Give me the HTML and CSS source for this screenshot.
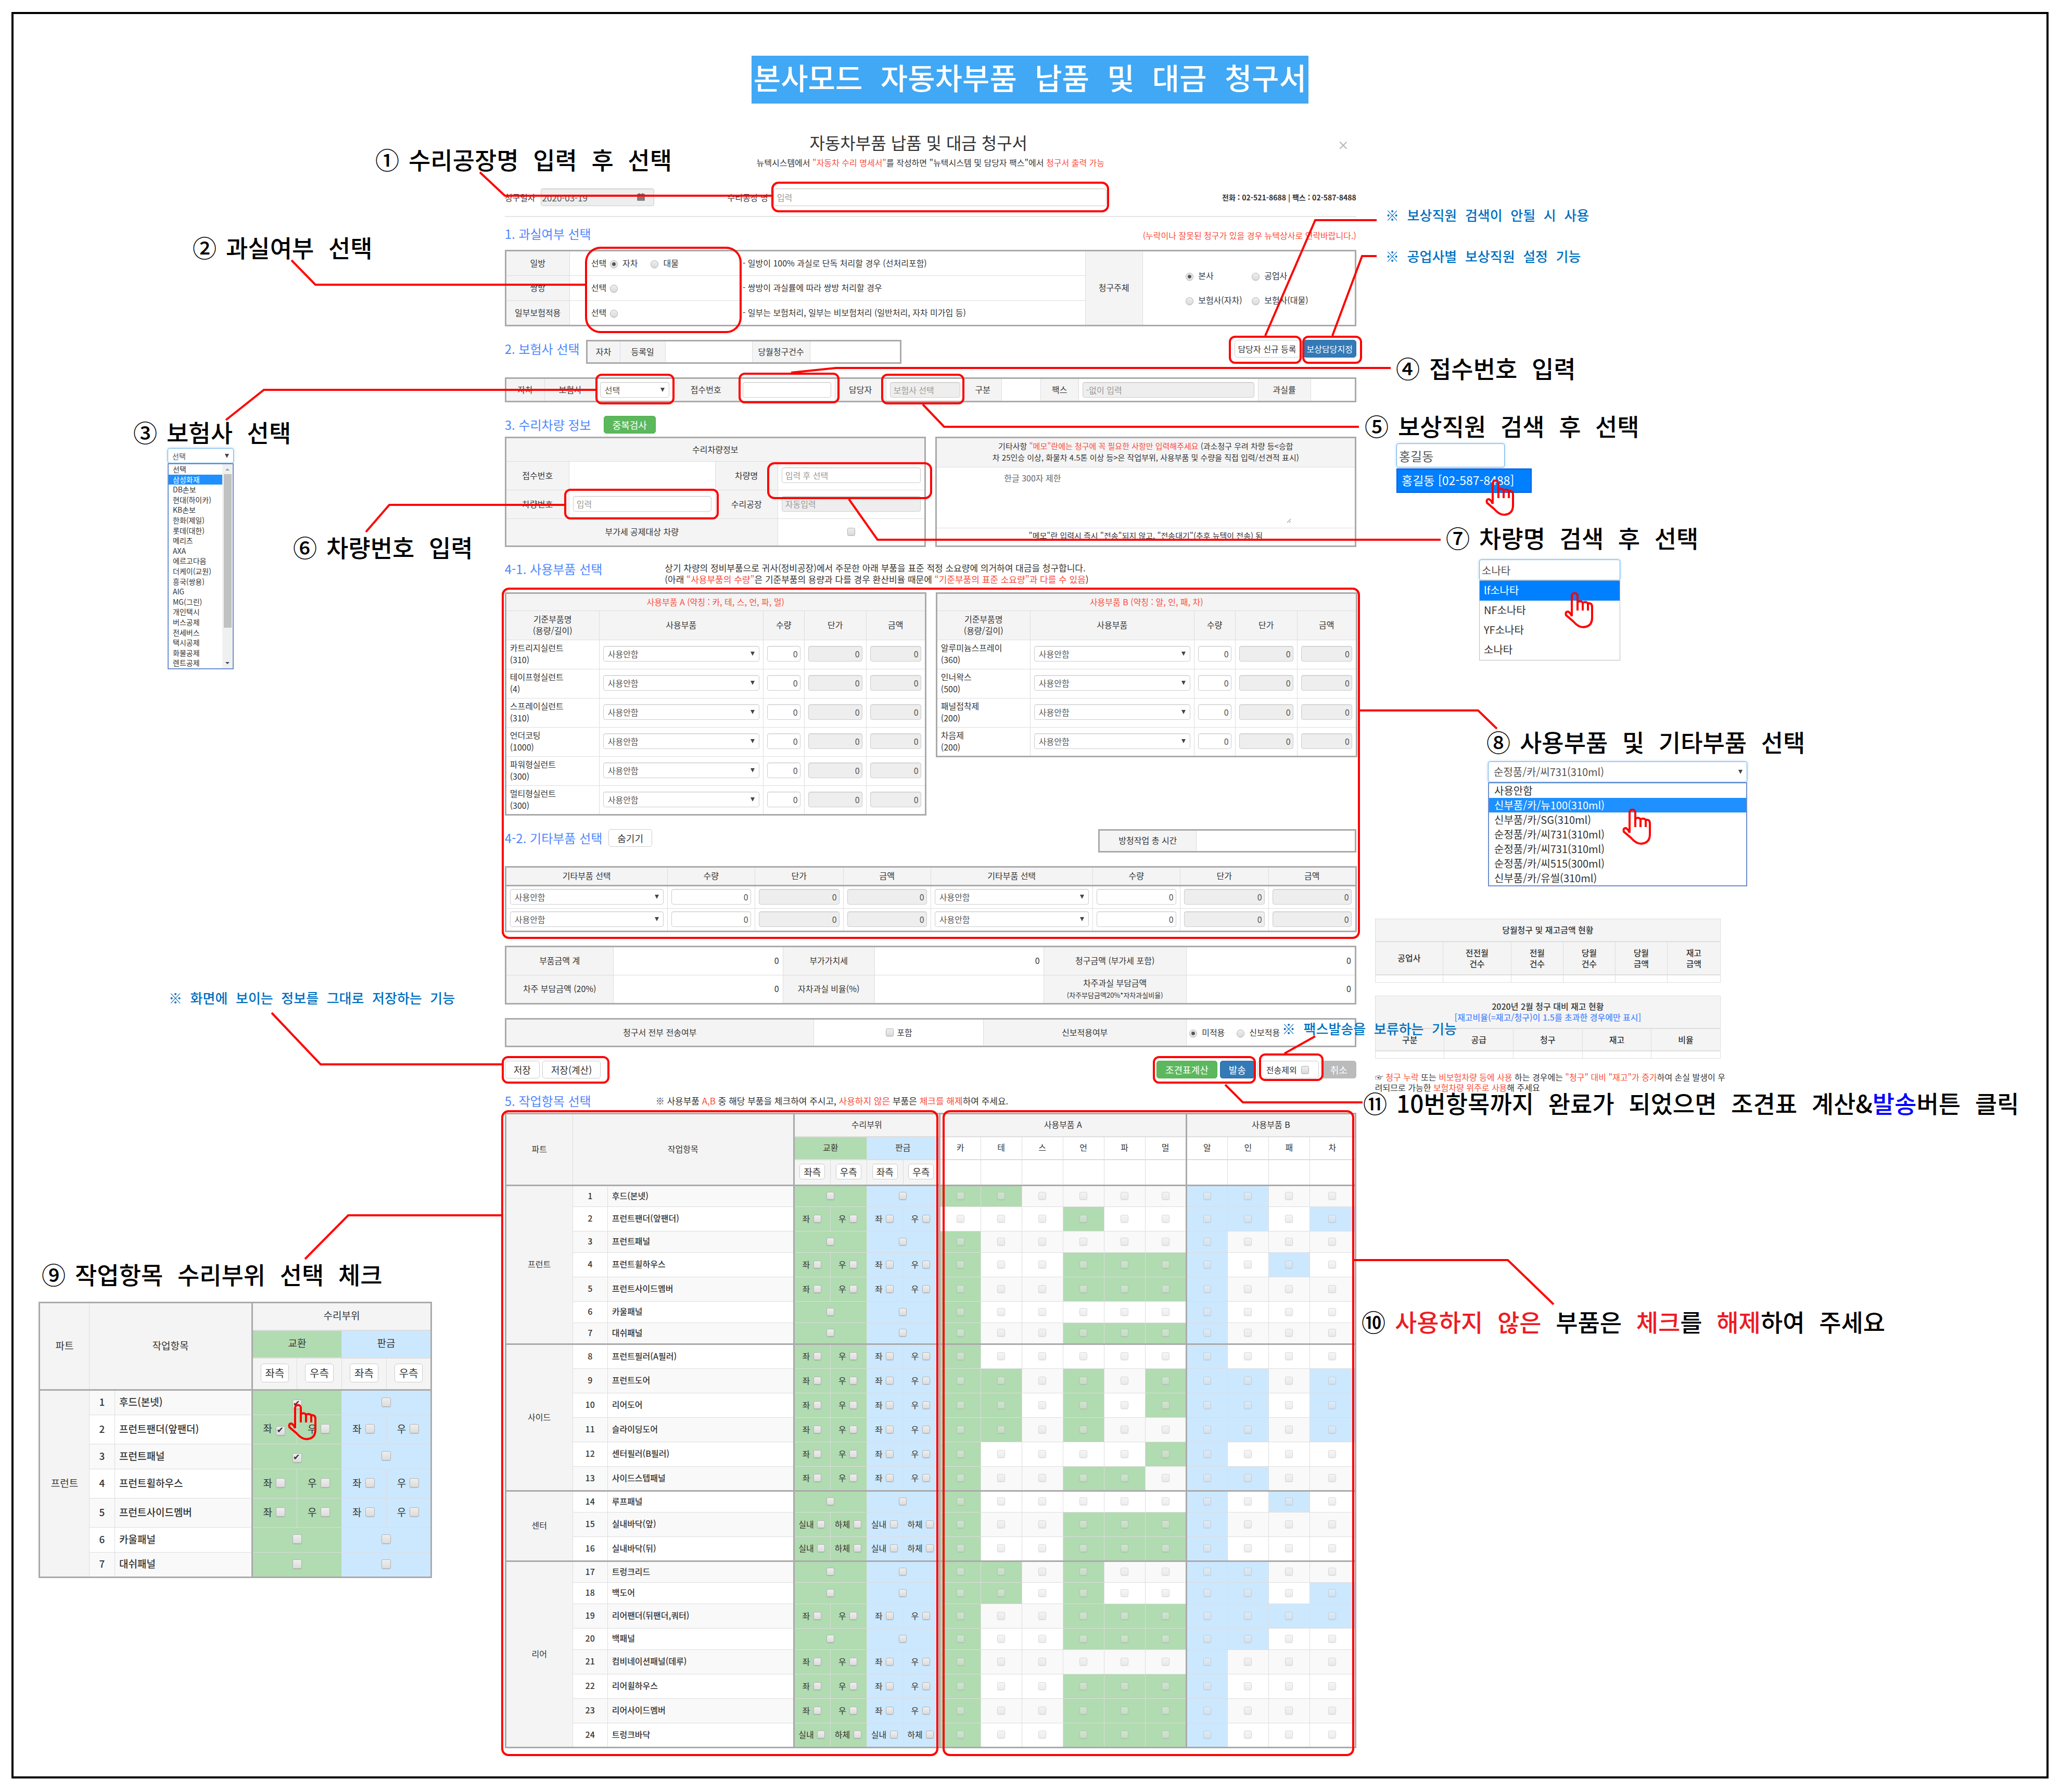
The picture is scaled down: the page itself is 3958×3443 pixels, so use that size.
FILE: index.html
```html
<!DOCTYPE html>
<html lang="ko">
<head>
<meta charset="utf-8">
<meta name="viewport" content="width=device-width, initial-scale=1">
<title>본사모드 자동차부품 납품 및 대금 청구서</title>
<link rel="stylesheet" href="styles.css">
</head>
<body>
<div class="poster">
  <h1 class="banner">본사모드 자동차부품 납품 및 대금 청구서</h1>
  <div class="board">
    <main class="claim">
      <header class="claim-head">
        <h2 class="claim-title">자동차부품 납품 및 대금 청구서</h2>
        <button class="close" type="button" aria-label="닫기">×</button>
        <p class="claim-sub">뉴텍시스템에서 <em>"자동차 수리 명세서"</em>를 작성하면 "뉴텍시스템 및 담당자 팩스"에서 <em>청구서 출력 가능</em></p>
      </header>

      <div class="top-row">
        <label for="date">청구일자</label>
        <span class="date-box"><input id="date" class="field locked" value="2020-03-19" readonly>
          <svg class="cal" viewBox="0 0 14 14" aria-hidden="true"><path d="M1 2h12v11H1zM1 5h12M1 8h12M1 10.500h12M4 0v3M10 0v3" fill="#aaa" stroke="#555" stroke-width="1.200"/></svg></span>
        <label for="shop" class="shop-label">수리공장 명</label>
        <input id="shop" class="field tall shop" placeholder="입력">
        <strong class="tel">전화 : 02-521-8688 | 팩스 : 02-587-8488</strong>
      </div>

      <div class="sec-head first">
        <h3>1. 과실여부 선택</h3>
        <em class="note">(누락이나 잘못된 청구가 있을 경우 뉴텍상사로 연락바랍니다.)</em>
      </div>
      <table class="sheet fault">
        <colgroup><col class="w-label"><col class="w-pick"><col class="w-desc"><col class="w-owner"><col></colgroup>
        <tr><th>일방</th><td class="seam">선택 <input type="radio" name="fault" id="f1" checked> <label for="f1">자차</label> <input class="apart" type="radio" name="fault" id="f2"> <label for="f2">대물</label></td><td>- 일방이 100% 과실로 단독 처리할 경우 (선처리포함)</td>
          <th rowspan="3">청구주체</th>
          <td rowspan="3"><div class="owners">
            <label><input type="radio" name="owner" checked> 본사</label><label><input type="radio" name="owner"> 공업사</label>
            <label><input type="radio" name="owner"> 보험사(자차)</label><label><input type="radio" name="owner"> 보험사(대물)</label></div></td></tr>
        <tr><th>쌍방</th><td class="seam"><label for="f3">선택</label> <input type="radio" name="fault" id="f3"></td><td>- 쌍방이 과실률에 따라 쌍방 처리할 경우</td></tr>
        <tr><th>일부보험적용</th><td class="seam"><label for="f4">선택</label> <input type="radio" name="fault" id="f4"></td><td>- 일부는 보험처리, 일부는 비보험처리 (일반처리, 자차 미가입 등)</td></tr>
      </table>

      <div class="band insurer-head">
        <h3>2. 보험사 선택</h3>
        <table class="sheet mini-sheet">
          <colgroup><col class="m1"><col class="m2"><col class="m3"><col class="m4"><col></colgroup>
          <tr><th>자차</th><th>등록일</th><td></td><th>당월청구건수</th><td></td></tr>
        </table>
        <div class="head-actions"><button type="button" class="btn small">담당자 신규 등록</button><button type="button" class="btn small primary">보상담당지정</button></div>
      </div>

      <table class="sheet band insurer">
        <colgroup><col class="i1"><col class="i2"><col class="i3"><col class="i4"><col class="i5"><col class="i6"><col class="i7"><col class="i8"><col class="i9"><col class="i10"><col class="i11"><col class="i12"><col></colgroup>
        <tr><th>자차</th><th>보험사</th><td><select class="field" aria-label="보험사"><option>선택</option></select></td>
          <th>접수번호</th><td><input class="field" aria-label="접수번호"></td>
          <th>담당자</th><td><input class="field locked" placeholder="보험사 선택" aria-label="담당자" readonly></td>
          <th>구분</th><td></td><th>팩스</th><td><input class="field locked" placeholder="-없이 입력" aria-label="팩스" readonly></td>
          <th>과실률</th><td></td></tr>
      </table>

      <div class="band car-head"><h3>3. 수리차량 정보</h3><button type="button" class="btn success check-btn">중복검사</button></div>
      <div class="pair">
        <table class="sheet car">
          <colgroup><col class="c-a"><col class="c-b"><col class="c-c"><col></colgroup>
          <tr class="h46"><th colspan="4">수리차량정보</th></tr>
          <tr class="h55"><th>접수번호</th><td></td><th>차량명</th><td><input class="field" placeholder="입력 후 선택" aria-label="차량명"></td></tr>
          <tr class="h55"><th>차량번호</th><td><input class="field" placeholder="입력" aria-label="차량번호"></td><th>수리공장</th><td><input class="field locked" placeholder="자동입력" aria-label="수리공장" readonly></td></tr>
          <tr class="h53"><th colspan="3"><label for="vat">부가세 공제대상 차량</label></th><td class="mid"><input type="checkbox" id="vat"></td></tr>
        </table>
        <table class="sheet memo">
          <tr class="h57"><th><label for="memo">기타사항 <em>"메모"란에는 청구에 꼭 필요한 사항만 입력해주세요</em> (과소청구 우려 차량 등&lt;승합<br>차 25인승 이상, 화물차 4.5톤 이상 등&gt;은 작업부위, 사용부품 및 수량을 직접 입력/선견적 표시)</label></th></tr>
          <tr class="h117"><td><textarea id="memo" placeholder="한글 300자 제한"></textarea></td></tr>
          <tr class="h35"><td class="mid">"메모"란 입력시 즉시 "전송"되지 않고, "전송대기"(추후 뉴텍이 전송) 됨</td></tr>
        </table>
      </div>

      <div class="parts-head">
        <h3>4-1. 사용부품 선택</h3>
        <p>상기 차량의 정비부품으로 귀사(정비공장)에서 주문한 아래 부품을 표준 적정 소요량에 의거하여 대금을 청구합니다.<br>(아래 <em>“사용부품의 수량”</em>은 기준부품의 용량과 다를 경우 환산비율 때문에 <em>“기준부품의 표준 소요량”과 다를 수 있음</em>)</p>
      </div>
      <div class="pair top">
        <table class="sheet parts" id="parts-a"></table>
        <table class="sheet parts" id="parts-b"></table>
      </div>

      <div class="band etc-head">
        <h3>4-2. 기타부품 선택</h3><button type="button" class="btn">숨기기</button>
        <table class="sheet hours"><colgroup><col class="hr-a"><col></colgroup><tr><th>방청작업 총 시간</th><td></td></tr></table>
      </div>
      <table class="sheet band etc" id="etc"></table>

      <table class="sheet band totals">
        <colgroup><col class="t1"><col class="t2"><col class="t3"><col class="t4"><col class="t5"><col></colgroup>
        <tr><th>부품금액 계</th><td>0</td><th>부가가치세</th><td>0</td><th>청구금액 (부가세 포함)</th><td>0</td></tr>
        <tr><th>차주 부담금액 (20%)</th><td>0</td><th>자차과실 비율(%)</th><td></td><th>차주과실 부담금액<br><small>(차주부담금액20%*자차과실비율)</small></th><td>0</td></tr>
      </table>

      <table class="sheet band send">
        <colgroup><col class="s1"><col class="s2"><col class="s3"><col></colgroup>
        <tr><th>청구서 전부 전송여부</th><td class="mid"><label><input type="checkbox"> 포함</label></td><th>신보적용여부</th>
          <td class="rate"><label><input type="radio" name="newrate" checked> 미적용</label> <label><input type="radio" name="newrate"> 신보적용</label></td></tr>
      </table>

      <div class="band actions">
        <button type="button" class="btn">저장</button><button type="button" class="btn">저장(계산)</button>
        <button type="button" class="btn success push">조견표계산</button><button type="button" class="btn primary">발송</button>
        <label class="btn hold">전송제외 <input type="checkbox"></label><button type="button" class="btn muted">취소</button>
      </div>

      <div class="work-head">
        <h3>5. 작업항목 선택</h3>
        <p>※ 사용부품 <em>A,B</em> 중 해당 부품을 체크하여 주시고, <em>사용하지 않은</em> 부품은 <em>체크를 해제</em>하여 주세요.</p>
      </div>
      <table class="sheet work" id="work"></table>
    </main>

    <aside class="side">
      <table class="stat stat-a">
        <colgroup><col class="a1"><col class="a2"><col class="a3"><col class="a3"><col class="a3"><col></colgroup>
        <tr class="h43"><th colspan="6">당월청구 및 재고금액 현황</th></tr>
        <tr class="h64"><th>공업사</th><th>전전월<br>건수</th><th>전월<br>건수</th><th>당월<br>건수</th><th>당월<br>금액</th><th>재고<br>금액</th></tr>
        <tr class="h15"><td></td><td></td><td></td><td></td><td></td><td></td></tr>
      </table>
      <table class="stat stat-b">
        <tr class="h62"><th colspan="5">2020년 2월 청구 대비 재고 현황<br><span class="link-blue">[재고비율(=재고/청구)이 1.5를 초과한 경우에만 표시]</span></th></tr>
        <tr class="h43"><th>구분</th><th>공급</th><th>청구</th><th>재고</th><th>비율</th></tr>
        <tr class="h15"><td></td><td></td><td></td><td></td><td></td></tr>
      </table>
      <p class="stat-note">☞ <em>청구 누락</em> 또는 <em>비보험차량 등에 사용</em> 하는 경우에는 <em>"청구" 대비 "재고"가 증가</em>하여 손실 발생이 우려되므로 가능한 <em>보험차량 위주로 사용</em>해 주세요</p>
    </aside>
  </div>
</div>

<div class="notes">
  <div class="sample s-insurer">
    <select class="field focus" aria-label="보험사 예시"><option>선택</option></select>
    <div class="drop scroll">
      <ul><li>선택</li><li class="on">삼성화재</li><li>DB손보</li><li>현대(하이카)</li><li>KB손보</li><li>한화(제일)</li><li>롯데(대한)</li><li>메리츠</li><li>AXA</li><li>에르고다음</li><li>더케이(교원)</li><li>흥국(쌍용)</li><li>AIG</li><li>MG(그린)</li><li>개인택시</li><li>버스공제</li><li>전세버스</li><li>택시공제</li><li>화물공제</li><li>렌트공제</li></ul>
      <div class="bar"><span class="tri up"></span><span class="thumb"></span><span class="tri down"></span></div>
    </div>
  </div>
  <div class="sample s-staff">
    <input class="field focus" value="홍길동" aria-label="담당자 예시">
    <ul class="drop"><li class="on">홍길동 [02-587-8488]</li></ul>
  </div>
  <div class="sample s-car">
    <input class="field focus" value="소나타" aria-label="차량명 예시">
    <ul class="drop"><li class="on">lf소나타</li><li>NF소나타</li><li>YF소나타</li><li>소나타</li></ul>
  </div>
  <div class="sample s-part">
    <select class="field focus" aria-label="사용부품 예시"><option>순정품/카/씨731(310ml)</option></select>
    <ul class="drop"><li>사용안함</li><li class="on">신부품/카/뉴100(310ml)</li><li>신부품/카/SG(310ml)</li><li>순정품/카/씨731(310ml)</li><li>순정품/카/씨731(310ml)</li><li>순정품/카/씨515(300ml)</li><li>신부품/카/유씰(310ml)</li></ul>
  </div>
  <div class="sample s-work"><table class="sheet work large" id="work-sample"></table></div>

  <svg class="lines" viewBox="0 0 3958 3443" aria-hidden="true">
    <defs>
      <g id="hand"><path d="M14 47V8a5.500 5.500 0 0 1 11 0V36M25 20q6-4 10 1V36M35 21q6-3 10 1V36M45 22q8-1 8 7V50q0 17-17 18c-8 0-14-5-19-11L3 45q-2-7 4-7q4 2 7 9"/></g>
    </defs>
    <rect x="1484" y="351" width="645" height="55" rx="12"/>
    <rect x="1126" y="476" width="297" height="162" rx="28"/>
    <rect x="2363" y="647" width="136" height="50" rx="10"/>
    <rect x="2504" y="647" width="111" height="50" rx="10"/>
    <rect x="1146" y="720" width="148" height="55" rx="10"/>
    <rect x="1421" y="718" width="190" height="55" rx="10"/>
    <rect x="1695" y="720" width="156" height="55" rx="10"/>
    <rect x="1476" y="890" width="313" height="67" rx="12"/>
    <rect x="1086" y="941" width="293" height="55" rx="10"/>
    <rect x="966" y="1131" width="1645" height="671" rx="12"/>
    <rect x="966" y="2031" width="203" height="49" rx="10"/>
    <rect x="2217" y="2031" width="194" height="49" rx="10"/>
    <rect x="2421" y="2026" width="120" height="49" rx="10"/>
    <rect x="965" y="2135" width="836" height="1237" rx="12"/>
    <rect x="1813" y="2135" width="787" height="1237" rx="12"/>
    <path d="M922 331 970 376H1484M560 500 606 547H1126M434 807 507 749H1146M1520 716 1606 707H2672M1773 777 1814 820H2611M703 1022 748 970H1086M1631 959 1686 1037H2768M2613 1365H2840L2876 1400M2431 645 2527 423H2645M2560 645 2617 492H2645M522 1946 616 2045H966M2354 2084 2388 2118H2618M2468 2024 2527 1991M965 2335H669L586 2419M2602 2421H2897L2985 2506"/>
    <use href="#hand" x="2854" y="921"/><use href="#hand" x="3006" y="1137"/><use href="#hand" x="3117" y="1553"/><use href="#hand" x="553" y="2697"/>
  </svg>

  <p class="callout c1"><span>①</span><span>수리공장명 입력 후 선택</span></p>
  <p class="callout c2"><span>②</span><span>과실여부 선택</span></p>
  <p class="callout c3"><span>③</span><span>보험사 선택</span></p>
  <p class="callout c4"><span>④</span><span>접수번호 입력</span></p>
  <p class="callout c5"><span>⑤</span><span>보상직원 검색 후 선택</span></p>
  <p class="callout c6"><span>⑥</span><span>차량번호 입력</span></p>
  <p class="callout c7"><span>⑦</span><span>차량명 검색 후 선택</span></p>
  <p class="callout c8"><span>⑧</span><span>사용부품 및 기타부품 선택</span></p>
  <p class="callout c9"><span>⑨</span><span>작업항목 수리부위 선택 체크</span></p>
  <p class="callout c10"><span>⑩</span><span><b class="hot">사용하지 않은</b> 부품은 <b class="hot">체크</b>를 <b class="hot">해제</b>하여 주세요</span></p>
  <p class="callout c11"><span>⑪</span><span><b class="latin">10</b>번항목까지 완료가 되었으면 조견표 계산<b class="latin">&amp;</b><b class="blue">발송</b>버튼 클릭</span></p>
  <p class="tip t-a">※ 보상직원 검색이 안될 시 사용</p>
  <p class="tip t-b">※ 공업사별 보상직원 설정 기능</p>
  <p class="tip t-c">※ 화면에 보이는 정보를 그대로 저장하는 기능</p>
  <p class="tip t-d">※ 팩스발송을 보류하는 기능</p>
</div>
<script src="app.js"></script>
</body>
</html>
```
FILE: styles.css
```css
* { box-sizing: border-box; }
body {
  margin: 0;
  position: relative;
  background: #fff;
  color: #333;
  font: 16px/22px "Noto Sans CJK KR", "Noto Sans", sans-serif;
}
h1, h2, h3, p, ul { margin: 0; padding: 0; font-weight: 400; }
em { font-style: normal; color: #fb4b3b; }
ul { list-style: none; }

.poster {
  margin: 23px 22px;
  border: 4px solid #000;
  padding: 80px 0 54px;
}
.banner {
  width: fit-content;
  margin: 0 auto;
  padding: 8px 4px 0;
  background: #41a8f5;
  color: #fff;
  font: 500 57px/84px "Liberation Mono", "Noto Sans CJK KR", sans-serif;
}
.board {
  display: grid;
  grid-template-columns: minmax(0, 1636fr) minmax(0, 1326fr);
  padding-left: 24.160%;
}
.claim { display: flex; flex-direction: column; padding-top: 52px; }
.claim > .band { margin-top: 26px; }
h3 { color: #4f87ff; font-size: 24px; line-height: 34px; white-space: nowrap; }

.claim-head { position: relative; text-align: center; }
.claim-title { font-size: 32px; line-height: 44px; padding-right: 46px; }
.claim-sub { margin-top: 6px; }
.close {
  position: absolute; right: 14px; top: 12px;
  border: 0; padding: 0; background: none; color: #bbb;
  font: 700 22px/28px "Noto Sans CJK KR", sans-serif;
}

/* form controls */
.field {
  display: block; width: 100%; height: 30px;
  border: 1px solid #ccc; border-radius: 4px;
  padding: 0 6px; background-color: #fff; color: #555;
  font: 16px/22px "Noto Sans CJK KR", sans-serif;
  box-shadow: inset 0 1px 1px rgba(0, 0, 0, .08);
}
.field::placeholder { color: #999; opacity: 1; }
.field.locked { background-color: #eee; }
select.field {
  appearance: none; padding: 0 8px;
  background-image: url("data:image/svg+xml,%3Csvg xmlns='http://www.w3.org/2000/svg' width='8' height='8'%3E%3Cpath d='M0 0h8L4 8z' fill='%23444'/%3E%3C/svg%3E");
  background-repeat: no-repeat; background-position: right 8px center;
}
input[type="radio"], input[type="checkbox"] {
  appearance: none; width: 15px; height: 15px; margin: 0 2px;
  border: 1px solid #b4b4b4; border-radius: 3px;
  background: linear-gradient(#eee, #dcdcdc);
  vertical-align: -1px;
  box-shadow: 0 1px 1px rgba(0, 0, 0, .15);
}
input[type="radio"] { border-radius: 50%; margin-right: 5px; vertical-align: -3px; }
input[type="radio"]:checked { background: radial-gradient(circle, #555 0 3px, #e6e6e6 4px); }
input[type="checkbox"]:checked::before {
  content: "✔"; display: block; color: #333;
  font: 16px/13px "DejaVu Sans", sans-serif;
}
input:disabled { opacity: .5; }
.btn {
  height: 34px; border: 1px solid #ccc; border-radius: 5px;
  padding: 0 16px; background: #fff; color: #333;
  font: 18px/22px "Noto Sans CJK KR", sans-serif; white-space: nowrap;
}
.btn.small { padding: 0 6px; font-size: 16px; }
.btn.success { background: #5cb85c; border-color: #4cae4c; color: #fff; }
.btn.primary { background: #337ab7; border-color: #2e6da4; color: #fff; }
.btn.muted { background: #bbb; border-color: #bbb; color: #fff; }

.top-row {
  display: flex; align-items: center; gap: 10px;
  margin-top: 39px; padding-bottom: 19px; border-bottom: 2px solid #e5e5e5;
  color: #333;
}
.date-box { position: relative; width: 218px; }
.date-box .field { height: 34px; font-size: 17px; padding: 0 2px; }
.cal { position: absolute; right: 18px; top: 9px; width: 15px; height: 15px; }
.field.tall { height: 34px; }
.shop-label { margin-left: 131px; }
.shop { width: 640px; }
.tel { margin-left: auto; font-size: 14px; font-weight: 700; }

.sec-head.first {
  display: flex; justify-content: space-between; margin-top: 15px; height: 48px;
}
.note { font-size: 16px; line-height: 40px; }

/* bordered sheets */
.sheet { width: 100%; border-collapse: collapse; table-layout: fixed; border: 3px solid #aaa; }
.sheet th, .sheet td { border: 1px solid #ddd; padding: 0 7px 3px; font-weight: 400; }
.sheet th { background: #f4f4f4; text-align: center; }
.sheet td { text-align: left; }
.sheet td.mid { text-align: center; }

.fault tr { height: 48px; }
.fault .seam { border-right-color: #eee; }
.fault input.apart { margin-left: 20px; }
.w-label { width: 123px; } .w-pick { width: 325px; } .w-desc { width: 666px; } .w-owner { width: 110px; }
.fault .seam { padding-left: 41px; }
.owners {
  display: grid; grid-template-columns: 127px auto; justify-content: start;
  gap: 25px 0; padding-left: 73px;
}

.insurer-head, .etc-head { display: flex; align-items: flex-start; }
.insurer-head { height: 46px; }
.mini-sheet { width: 606px; height: 46px; margin-left: 12px; }
.mini-sheet th, .insurer th { padding: 0 0 3px; }
.insurer td { padding-bottom: 0; }
.m1 { width: 64px; } .m2 { width: 87px; } .m3 { width: 167px; } .m4 { width: 111px; }
.head-actions { display: flex; gap: 6px; margin-left: auto; }
.insurer tr { height: 45px; }
.i1 { width: 75px; } .i2 { width: 99px; } .i3 { width: 148px; } .i4 { width: 126px; }
.i5 { width: 185px; } .i6 { width: 98px; } .i7 { width: 150px; } .i8 { width: 72px; }
.i9 { width: 75px; } .i10 { width: 73px; } .i11 { width: 345px; } .i12 { width: 101px; }

.car-head { display: flex; align-items: center; height: 34px; }
.check-btn { margin-left: 24px; }
.pair { display: grid; grid-template-columns: 1fr 1fr; gap: 18px; margin-top: 6px; }
.pair.top { align-items: start; margin-top: 14px; }
.h46 { height: 46px; } .h55 { height: 55px; } .h53 { height: 53px; }
.h57 { height: 57px; } .h117 { height: 117px; } .h35 { height: 35px; }
.c-a { width: 122px; } .c-b { width: 281px; } .c-c { width: 120px; }
.memo th { font-size: 15px; }
.memo .h35 td { font-size: 15px; line-height: 20px; vertical-align: top; padding-top: 4px; }
textarea {
  display: block; width: 560px; height: 100px; margin: 0 auto; border: 0; padding: 2px 8px;
  font: 16px/22px "Noto Sans CJK KR", sans-serif; resize: both;
}
textarea::placeholder { color: #666; }

.parts-head, .work-head { display: flex; }
.parts-head { margin-top: 29px; }
.parts-head p { margin-left: 120px; font-size: 17px; line-height: 22px; }
.parts-head h3 { line-height: 26px; }
.parts tr { height: 56px; }
.parts .cap { height: 34px; }
.parts .cap th { color: #fb4b3b; }
.parts td:first-child { line-height: 23px; }
.p1 { width: 180px; } .p2 { width: 315px; } .p3 { width: 79px; } .p4 { width: 119px; } .p5 { width: 114px; }
.num { text-align: right; padding: 0 4px; }

.etc-head { height: 45px; gap: 12px; }
.hours { width: 496px; height: 45px; margin-left: auto; }
.hr-a { width: 187px; }
.etc tr { height: 44px; }
.etc .cap { height: 36px; border-bottom: 3px solid #aaa; }
.e1 { width: 311px; } .e2 { width: 168px; } .e3 { width: 170px; }

.totals tr { height: 55px; }
.totals td { text-align: right; }
.totals small { font-size: 13px; line-height: 20px; }
.t1 { width: 207px; } .t2 { width: 326px; } .t3 { width: 176px; } .t4 { width: 325px; } .t5 { width: 274px; }
.send tr { height: 53px; }
.send td.rate { padding: 0 3px 3px; }
.rate label + label { margin-left: 16px; }
.s1 { width: 592px; } .s2 { width: 326px; } .s3 { width: 390px; }

.actions { display: flex; gap: 5px; }
.push { margin-left: auto; }
.hold { display: flex; align-items: center; gap: 6px; font-size: 16px; }

.work-head { align-items: center; margin-top: 26px; margin-bottom: 6px; }
.work-head p { margin-left: 124px; font-size: 17px; }

/* work item matrix */
.work .single { height: 41px; }
.work .double { height: 47px; }
.work .hd1, .work .hd2 { height: 44px; }
.work .hd3 { height: 50px; }
.work th, .work td { padding: 0 8px 4px; }
.work .box { padding: 0 0 3px; text-align: center; white-space: nowrap; }
.work .box input { margin-left: 2px; }
.work tbody tr { background: #fff; }
.work tbody tr.odd { background: #f9f9f9; }
.work tbody { border-top: 3px solid #aaa; }
.work .idx { background: none; font-weight: 500; }
.work .item { font-weight: 500; }
.work .edge { border-left: 3px solid #aaa; }
.work .hd1 th, .work .hd2 th { border-bottom: 2px solid #ddd; }
.work th.green, .work td.green { background: #b1dbb1; }
.work th.sky, .work td.sky { background: #cce8ff; }
.work th.white { background: #fff; }
.work .btn { height: 30px; padding: 0 7px; }
.k1 { width: 129px; } .k2 { width: 67px; } .k3 { width: 358px; } .k4 { width: 70px; } .k5 { width: 79px; }
.work.large { font-size: 19px; line-height: 24px; }
.work.large .single { height: 48px; }
.work.large .double { height: 56px; }
.work.large .hd1, .work.large .hd2 { height: 53px; }
.work.large .hd3 { height: 62px; }
.work.large .btn { height: 36px; font-size: 20px; padding: 0 8px; }
.work.large input { width: 18px; height: 18px; }
.large .k1 { width: 96px; } .large .k2 { width: 49px; } .large .k3 { width: 264px; } .large .k4 { width: 86px; }

/* monthly figures */
.side { padding: 1566px 0 0 36px; }
.stat {
  width: 664px; border-collapse: collapse; table-layout: fixed;
  font-size: 16px; line-height: 21px; margin-bottom: 25px;
}
.stat th, .stat td { border: 1px solid #ddd; padding: 0; }
.stat th { background: #f4f4f4; font-weight: 500; border-bottom-width: 2px; }
.h43 { height: 43px; } .h64 { height: 64px; } .h15 { height: 15px; } .h62 { height: 62px; }
.a1 { width: 130px; } .a2 { width: 131px; } .a3 { width: 100px; }
.link-blue { color: #4f87ff; }
.stat-note { width: 680px; line-height: 20px; word-break: break-all; }

/* annotations laid over the form */
.notes { position: absolute; inset: 0; pointer-events: none; }
.lines { position: absolute; left: 0; top: 0; width: 100%; height: auto; fill: none; stroke: #f00; stroke-width: 4; }
.callout {
  position: absolute; display: flex; align-items: baseline; gap: 18px; color: #000; white-space: nowrap;
  font: 500 46px/56px "Liberation Mono", "Noto Sans CJK KR", sans-serif;
}
.callout b { font-weight: 500; }
.callout > span:first-child { font-family: "Noto Sans CJK KR", sans-serif; }
.hot { color: #ed1c24; }
.blue { color: #00f; }
.latin { font-family: "Noto Sans CJK KR", sans-serif; }
.c1 { left: 721px; top: 277px; }
.c2 { left: 370px; top: 446px; }
.c3 { left: 256px; top: 801px; }
.c4 { left: 2682px; top: 678px; }
.c5 { left: 2622px; top: 789px; }
.c6 { left: 563px; top: 1022px; }
.c7 { left: 2778px; top: 1004px; }
.c8 { left: 2856px; top: 1396px; }
.c9 { left: 80px; top: 2419px; }
.c10 { left: 2616px; top: 2510px; }
.c11 { left: 2619px; top: 2090px; }
.tip {
  position: absolute; color: #0070c0; white-space: nowrap;
  font: 500 26px/34px "Liberation Mono", "Noto Sans CJK KR", sans-serif;
}
.t-a { left: 2662px; top: 400px; }
.t-b { left: 2662px; top: 479px; }
.t-c { left: 324px; top: 1904px; }
.t-d { left: 2463px; top: 1963px; }

.sample { position: absolute; }
.sample .field { border-color: #66afe9; box-shadow: 0 0 5px rgba(102, 175, 233, .6); }
.drop { background: #fff; border: 2px solid #6c8fd0; color: #333; }
.drop .on { color: #fff; background: #1e90ff; }
.s-insurer { left: 322px; top: 861px; width: 127px; font-size: 14px; line-height: 19px; }
.s-insurer .field { height: 29px; font-size: 14px; }
.s-insurer li { padding-left: 8px; }
.s-insurer .drop { display: flex; height: 396px; }
.s-insurer ul { flex: 1; display: grid; grid-auto-rows: 1fr; }
.bar { width: 20px; background: #f0f0f0; display: flex; flex-direction: column; align-items: center; padding: 8px 0; }
.thumb { width: 15px; height: 295px; background: #c1c1c1; margin: 7px 0 auto; }
.tri { border: 4px solid transparent; }
.tri.up { border-top: 0; border-bottom-color: #999; }
.tri.down { border-bottom: 0; border-top-color: #444; }
.s-staff { left: 2683px; top: 852px; width: 260px; }
.s-staff .field { width: 208px; height: 46px; font-size: 24px; line-height: 30px; padding: 0 4px; }
.s-staff .drop { margin-top: 2px; border-color: #0060e0; }
.s-staff li { height: 43px; padding-left: 8px; font-size: 23px; line-height: 40px; }
.s-staff .on, .s-car .on { background: #007fff; }
.s-car { left: 2842px; top: 1075px; width: 271px; }
.s-car .field { height: 40px; font-size: 20px; padding: 0 4px; }
.s-car .drop { border: 1px solid #bbb; }
.s-car li { height: 38px; padding-left: 8px; font-size: 20px; line-height: 36px; }
.s-part { left: 2859px; top: 1463px; width: 498px; }
.s-part .field { height: 40px; font-size: 20px; padding: 0 10px; }
.s-part li { height: 28px; padding-left: 10px; font-size: 20px; line-height: 27px; }
.s-work { left: 74px; top: 2501px; width: 755px; }
```
FILE: app.js
```js
const parts = {
  a: { title: '사용부품 A (약칭 : 카, 테, 스, 언, 파, 멀)', rows: [['카트리지실런트', 310], ['테이프형실런트', 4], ['스프레이실런트', 310], ['언더코팅', 1000], ['파워형실런트', 300], ['멀티형실런트', 300]] },
  b: { title: '사용부품 B (약칭 : 알, 인, 패, 차)', rows: [['알루미늄스프레이', 360], ['인너왁스', 500], ['패널접착제', 200], ['차음제', 200]] }
};
const pick = label => `<td><select class="field" aria-label="${label}"><option>사용안함</option></select></td>`;
const num = (label, locked) => `<td><input class="field num${locked ? ' locked' : ''}" value="0" aria-label="${label}"${locked ? ' readonly' : ''}></td>`;
const amounts = num('수량') + num('단가', true) + num('금액', true);

for (const key of ['a', 'b']) {
  const p = parts[key];
  document.getElementById('parts-' + key).innerHTML =
    '<colgroup><col class="p1"><col class="p2"><col class="p3"><col class="p4"><col class="p5"></colgroup>' +
    `<tr class="cap"><th colspan="5">${p.title}</th></tr>` +
    '<tr><th>기준부품명<br>(용량/길이)</th><th>사용부품</th><th>수량</th><th>단가</th><th>금액</th></tr>' +
    p.rows.map(([n, v]) => `<tr><td>${n}<br>(${v})</td>${pick(n)}${amounts}</tr>`).join('');
}

const half = '<th>기타부품 선택</th><th>수량</th><th>단가</th><th>금액</th>';
const etcRow = `<tr>${(pick('기타부품') + amounts).repeat(2)}</tr>`;
document.getElementById('etc').innerHTML =
  '<colgroup>' + '<col class="e1"><col class="e2"><col class="e3"><col class="e2">'.repeat(2) + '</colgroup>' +
  `<tr class="cap">${half}${half}</tr>` + etcRow.repeat(2);

// [name, left/right labels or '' for a single box, default parts A+B]
const groups = [
  ['프런트', [['후드(본넷)', '', '1100001100'], ['프런트팬더(앞팬더)', '좌우', '0001001101'], ['프런트패널', '', '1000001000'],
    ['프런트휠하우스', '좌우', '1001111010'], ['프런트사이드멤버', '좌우', '1001111000'], ['카울패널', '', '1000001000'], ['대쉬패널', '', '1001111000']]],
  ['사이드', [['프런트필러(A필러)', '좌우', '1000001000'], ['프런트도어', '좌우', '1101011101'], ['리어도어', '좌우', '1101011101'],
    ['슬라이딩도어', '좌우', '1101001101'], ['센터필러(B필러)', '좌우', '1000011000'], ['사이드스텝패널', '좌우', '1001101100']]],
  ['센터', [['루프패널', '', '1000001010'], ['실내바닥(앞)', '실내하체', '1001111000'], ['실내바닥(뒤)', '실내하체', '1001111000']]],
  ['리어', [['트렁크리드', '', '1101001100'], ['백도어', '', '1101001101'], ['리어팬더(뒤팬더,쿼터)', '좌우', '1001111111'],
    ['백패널', '', '1001111100'], ['컴비네이션패널(데루)', '좌우', '1000001000'], ['리어휠하우스', '좌우', '1001111000'],
    ['리어사이드멤버', '좌우', '1001111000'], ['트렁크바닥', '실내하체', '1001111000']]]
];

function workTable(el, list, withParts, checked) {
  let n = 0;
  const side = (name, kind, labels, cls) => {
    const edge = cls === 'green' ? ' edge' : '';
    const on = i => checked.includes(`${n}${cls}${i}`) ? ' checked' : '';
    if (!labels) return `<td colspan="2" class="box ${cls}${edge}"><input type="checkbox" aria-label="${name} ${kind}"${on(0)}></td>`;
    const h = labels.length / 2;
    return [labels.slice(0, h), labels.slice(h)].map((t, i) =>
      `<td class="box ${cls}${i ? '' : edge}"><label>${t} <input type="checkbox"${on(i)}></label></td>`).join('');
  };
  const names = [...'카테스언파멀알인패차'];
  let html = '<colgroup><col class="k1"><col class="k2"><col class="k3">' + '<col class="k4">'.repeat(4) +
    (withParts ? '<col class="k5">'.repeat(9) + '<col>' : '') + '</colgroup><thead>';
  html += '<tr class="hd1"><th rowspan="3">파트</th><th rowspan="3" colspan="2">작업항목</th><th colspan="4" class="edge">수리부위</th>' +
    (withParts ? '<th colspan="6" class="edge">사용부품 A</th><th colspan="4" class="edge">사용부품 B</th>' : '') + '</tr>';
  const cell = (t, i) => `<th class="white${i === 0 || i === 6 ? ' edge' : ''}">${t}</th>`;
  html += '<tr class="hd2"><th colspan="2" class="green edge">교환</th><th colspan="2" class="sky">판금</th>' +
    (withParts ? names.map(cell).join('') : '') + '</tr>';
  html += '<tr class="hd3">' + [0, 1, 2, 3].map(i => `<th class="box${i ? '' : ' edge'}"><button type="button" class="btn">${i % 2 ? '우측' : '좌측'}</button></th>`).join('') +
    (withParts ? names.map((_, i) => cell('', i)).join('') : '') + '</tr></thead>';
  for (const [group, items] of list) {
    html += '<tbody>';
    items.forEach(([name, labels, flags], i) => {
      n += 1;
      html += `<tr class="${labels ? 'double' : 'single'}${n % 2 ? ' odd' : ''}">` +
        (i ? '' : `<th rowspan="${items.length}">${group}</th>`) +
        `<th class="idx">${n}</th><td class="item">${name}</td>` +
        side(name, '교환', labels, 'green') + side(name, '판금', labels, 'sky');
      if (withParts) html += [...flags].map((f, k) =>
        `<td class="box${k === 0 || k === 6 ? ' edge' : ''}${f === '1' ? (k < 6 ? ' green' : ' sky') : ''}"><input type="checkbox" disabled aria-label="${name} ${names[k]}"></td>`).join('');
      html += '</tr>';
    });
    html += '</tbody>';
  }
  el.innerHTML = html;
}
workTable(document.getElementById('work'), groups, true, []);
workTable(document.getElementById('work-sample'), groups.slice(0, 1), false, ['1green0', '2green0', '3green0']);
```
